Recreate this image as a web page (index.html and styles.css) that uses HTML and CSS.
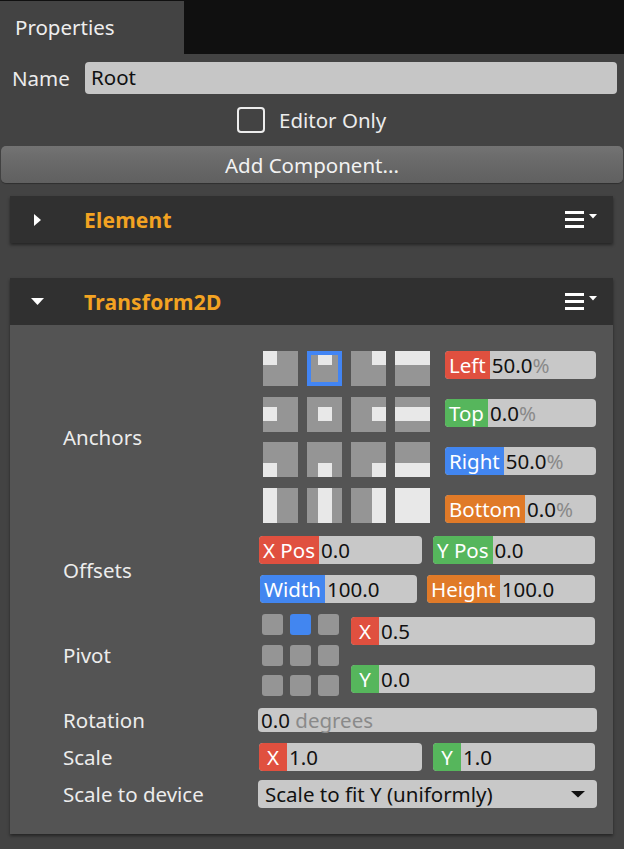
FILE: index.html
```html
<!DOCTYPE html>
<html>
<head>
<meta charset="utf-8">
<link rel="stylesheet" href="styles.css">
</head>
<body>
<div class="tabbar"><div class="tab">Properties</div></div>

<div class="name-row">
  <span class="name-label">Name</span>
  <div class="input">Root</div>
</div>

<div class="check-row">
  <span class="checkbox"></span>
  <span class="check-text">Editor Only</span>
</div>

<div class="add-btn">Add Component...</div>

<div class="comp comp-first">
  <div class="comp-head">
    <span class="twisty"><svg width="14" height="14" viewBox="0 0 14 14"><polygon points="3,1 10,7 3,13" fill="#ffffff"/></svg></span>
    <span class="comp-title">Element</span>
    <svg class="menu" width="33" height="17" viewBox="0 0 33 17"><rect x="0" y="0" width="19" height="3" fill="#fff"/><rect x="0" y="7" width="19" height="3" fill="#fff"/><rect x="0" y="14" width="19" height="3" fill="#fff"/><polygon points="24,3 32,3 28,7.5" fill="#fff"/></svg>
  </div>
</div>

<div class="comp comp-second">
  <div class="comp-head">
    <span class="twisty"><svg width="14" height="14" viewBox="0 0 14 14"><polygon points="0,3 13,3 6.5,10" fill="#ffffff"/></svg></span>
    <span class="comp-title">Transform2D</span>
    <svg class="menu" width="33" height="17" viewBox="0 0 33 17"><rect x="0" y="0" width="19" height="3" fill="#fff"/><rect x="0" y="7" width="19" height="3" fill="#fff"/><rect x="0" y="14" width="19" height="3" fill="#fff"/><polygon points="24,3 32,3 28,7.5" fill="#fff"/></svg>
  </div>
  <div class="comp-body">

    <div class="row row-anchors">
      <div class="lbl">Anchors</div>
      <div class="ctrl anchors">
        <div class="anchor-grid">
          <svg width="35" height="35"><rect width="35" height="35" fill="#959595"/><rect x="0" y="0" width="14" height="14" fill="#e8e8e8"/></svg>
          <svg width="35" height="35"><rect width="35" height="35" fill="#959595"/><rect x="11" y="0" width="14" height="14" fill="#e8e8e8"/><rect x="2" y="2" width="31" height="31" fill="none" stroke="#4285f4" stroke-width="4"/></svg>
          <svg width="35" height="35"><rect width="35" height="35" fill="#959595"/><rect x="21" y="0" width="14" height="14" fill="#e8e8e8"/></svg>
          <svg width="35" height="35"><rect width="35" height="35" fill="#959595"/><rect x="0" y="0" width="35" height="14" fill="#e8e8e8"/></svg>

          <svg width="35" height="35"><rect width="35" height="35" fill="#959595"/><rect x="0" y="10" width="14" height="14" fill="#e8e8e8"/></svg>
          <svg width="35" height="35"><rect width="35" height="35" fill="#959595"/><rect x="11" y="10" width="14" height="14" fill="#e8e8e8"/></svg>
          <svg width="35" height="35"><rect width="35" height="35" fill="#959595"/><rect x="21" y="10" width="14" height="14" fill="#e8e8e8"/></svg>
          <svg width="35" height="35"><rect width="35" height="35" fill="#959595"/><rect x="0" y="10" width="35" height="14" fill="#e8e8e8"/></svg>

          <svg width="35" height="35"><rect width="35" height="35" fill="#959595"/><rect x="0" y="21" width="14" height="14" fill="#e8e8e8"/></svg>
          <svg width="35" height="35"><rect width="35" height="35" fill="#959595"/><rect x="11" y="21" width="14" height="14" fill="#e8e8e8"/></svg>
          <svg width="35" height="35"><rect width="35" height="35" fill="#959595"/><rect x="21" y="21" width="14" height="14" fill="#e8e8e8"/></svg>
          <svg width="35" height="35"><rect width="35" height="35" fill="#959595"/><rect x="0" y="21" width="35" height="14" fill="#e8e8e8"/></svg>

          <svg width="35" height="35"><rect width="35" height="35" fill="#959595"/><rect x="0" y="0" width="14" height="35" fill="#e8e8e8"/></svg>
          <svg width="35" height="35"><rect width="35" height="35" fill="#959595"/><rect x="11" y="0" width="14" height="35" fill="#e8e8e8"/></svg>
          <svg width="35" height="35"><rect width="35" height="35" fill="#959595"/><rect x="21" y="0" width="14" height="35" fill="#e8e8e8"/></svg>
          <svg width="35" height="35"><rect width="35" height="35" fill="#e8e8e8"/></svg>
        </div>
        <div class="anchor-fields">
          <div class="field"><span class="tag red">Left</span><span class="val">50.0<span class="unit">%</span></span></div>
          <div class="field"><span class="tag green">Top</span><span class="val">0.0<span class="unit">%</span></span></div>
          <div class="field"><span class="tag blue">Right</span><span class="val">50.0<span class="unit">%</span></span></div>
          <div class="field"><span class="tag orange">Bottom</span><span class="val">0.0<span class="unit">%</span></span></div>
        </div>
      </div>
    </div>

    <div class="row row-offsets">
      <div class="lbl">Offsets</div>
      <div class="ctrl offsets">
        <div class="pair pair-pos">
          <div class="field f-xpos"><span class="tag red">X Pos</span><span class="val">0.0</span></div>
          <div class="field f-ypos"><span class="tag green">Y Pos</span><span class="val">0.0</span></div>
        </div>
        <div class="pair pair-size">
          <div class="field f-width"><span class="tag blue">Width</span><span class="val">100.0</span></div>
          <div class="field f-height"><span class="tag orange">Height</span><span class="val">100.0</span></div>
        </div>
      </div>
    </div>

    <div class="row row-pivot">
      <div class="lbl">Pivot</div>
      <div class="ctrl pivot">
        <div class="pivot-grid">
          <span class="pdot"></span><span class="pdot on"></span><span class="pdot"></span>
          <span class="pdot"></span><span class="pdot"></span><span class="pdot"></span>
          <span class="pdot"></span><span class="pdot"></span><span class="pdot"></span>
        </div>
        <div class="pivot-fields">
          <div class="field"><span class="tag red tag-sq">X</span><span class="val">0.5</span></div>
          <div class="field"><span class="tag green tag-sq">Y</span><span class="val">0.0</span></div>
        </div>
      </div>
    </div>

    <div class="row row-rotation">
      <div class="lbl">Rotation</div>
      <div class="ctrl">
        <div class="field f-rot"><span class="val">0.0 <span class="unit">degrees</span></span></div>
      </div>
    </div>

    <div class="row row-scale">
      <div class="lbl">Scale</div>
      <div class="ctrl pair pair-scale">
        <div class="field f-sx"><span class="tag red tag-sq">X</span><span class="val">1.0</span></div>
        <div class="field f-sy"><span class="tag green tag-sq">Y</span><span class="val">1.0</span></div>
      </div>
    </div>

    <div class="row row-device">
      <div class="lbl">Scale to device</div>
      <div class="ctrl">
        <div class="dropdown"><span>Scale to fit Y (uniformly)</span><svg width="14" height="8" viewBox="0 0 14 8"><polygon points="0,1 14,1 7,7.5" fill="#111"/></svg></div>
      </div>
    </div>

  </div>
</div>
</body>
</html>
```

FILE: styles.css
```css
* { box-sizing: border-box; }

html, body {
  margin: 0;
  padding: 0;
}

body {
  width: 624px;
  height: 849px;
  overflow: hidden;
  background: #434343;
  font-family: "Noto Sans", "Open Sans", sans-serif;
  font-size: 20.5px;
  color: #ececec;
}

.tabbar {
  background: #101010;
  padding-top: 1px;
  height: 54px;
}

.tab {
  width: 184px;
  height: 53px;
  background: #434343;
  padding-left: 15px;
  line-height: 53px;
  color: #eeeeee;
}

.name-row {
  margin-top: 8px;
  display: flex;
  align-items: center;
  padding: 0 7px 0 12px;
}

.name-label {
  width: 73px;
}

.input {
  flex: 1;
  height: 32px;
  line-height: 31px;
  background: #c6c6c6;
  border-radius: 4px;
  padding-left: 6px;
  color: #111;
}

.check-row {
  margin-top: 13px;
  height: 26px;
  display: flex;
  align-items: center;
  padding-left: 237px;
  gap: 14px;
}

.checkbox {
  width: 28px;
  height: 26px;
  border: 2px solid #ececec;
  border-radius: 4px;
}

.add-btn {
  margin: 13px 1px 0;
  height: 37px;
  line-height: 39px;
  text-align: center;
  border-radius: 5px;
  background: linear-gradient(#737373, #6a6a6a 40%, #606060);
  color: #f2f2f2;
  box-shadow: 0 1px 1px rgba(0,0,0,0.3);
}

.comp {
  margin: 0 11px 0 10px;
  box-shadow: 0 2px 3px rgba(0,0,0,0.45);
}

.comp-first { margin-top: 13px; }
.comp-second { margin-top: 35px; }

.comp-head {
  height: 47px;
  background: #303030;
  display: flex;
  align-items: center;
  padding-right: 15px;
}

.twisty {
  width: 74px;
  padding-left: 21px;
  display: flex;
  align-items: center;
}

.comp-title {
  flex: 1;
  font-weight: bold;
  font-size: 21px;
  color: #f3a322;
  line-height: 1;
  padding-top: 1px;
  letter-spacing: 0.2px;
}

.menu {
  display: block;
  margin-top: -1px;
}

.comp-body {
  background: #545454;
  padding: 26px 16px 26px 53px;
}

.row {
  display: flex;
  align-items: center;
}

.lbl {
  width: 195px;
  flex: none;
  color: #ececec;
  line-height: 24px;
}

.ctrl {
  flex: 1;
}

.row-offsets { margin-top: 13px; }
.row-pivot { margin-top: 11px; }
.row-rotation { margin-top: 12px; }
.row-scale { margin-top: 11px; }
.row-device { margin-top: 9px; }

/* fields */
.field {
  display: flex;
  height: 28px;
  line-height: 28px;
  background: #c8c8c8;
  border-radius: 4px;
  white-space: nowrap;
}

.tag {
  padding: 0 4px;
  color: #ffffff;
  flex: none;
  border-radius: 4px 0 0 4px;
}

.tag-sq {
  width: 28px;
  padding: 0;
  text-align: center;
}

.val {
  padding-left: 2px;
  color: #111;
}

.unit { color: #8a8a8a; }

.red { background: #e0503f; }
.green { background: #56b65c; }
.blue { background: #4286f0; }
.orange { background: #e07a28; }

/* anchors */
.anchors {
  display: flex;
  height: 172px;
}

.anchor-grid {
  margin-left: 5px;
  display: grid;
  grid-template-columns: repeat(4, 35px);
  grid-template-rows: repeat(4, 35px);
  column-gap: 9px;
  row-gap: 10.67px;
}

.anchor-grid svg { display: block; }

.anchor-fields {
  margin-left: 15px;
  width: 151px;
  display: flex;
  flex-direction: column;
  justify-content: space-between;
}

/* offsets */
.offsets {
  display: flex;
  flex-direction: column;
  gap: 11px;
}

.pair { display: flex; }

.pair-pos { margin-left: 1px; gap: 11px; }
.f-xpos { width: 163px; }
.f-ypos { width: 162px; }

.pair-size { margin-left: 2px; gap: 10px; }
.f-width { width: 157px; }
.f-height { width: 168px; }

/* pivot */
.pivot {
  display: flex;
  height: 82px;
}

.pivot-grid {
  margin-left: 4px;
  display: grid;
  grid-template-columns: repeat(3, 21px);
  grid-template-rows: repeat(3, 21px);
  column-gap: 7px;
  row-gap: 9.5px;
}

.pdot {
  background: #959595;
  border-radius: 3px;
}

.pdot.on { background: #4286f0; }

.pivot-fields {
  margin-left: 12px;
  width: 244px;
  padding-top: 3px;
  display: flex;
  flex-direction: column;
  gap: 20px;
}

/* rotation */
.f-rot {
  width: 339px;
  height: 24px;
  line-height: 24px;
}

.f-rot .val { padding-left: 3px; }

/* scale */
.pair-scale { margin-left: 1px; gap: 11px; flex: none; }
.f-sx { width: 163px; }
.f-sy { width: 162px; }

/* dropdown */
.dropdown {
  width: 339px;
  height: 28px;
  line-height: 28px;
  background: #c8c8c8;
  border-radius: 4px;
  padding: 0 12px 0 7px;
  color: #111;
  display: flex;
  justify-content: space-between;
  align-items: center;
}

.dropdown svg { display: block; }
```
